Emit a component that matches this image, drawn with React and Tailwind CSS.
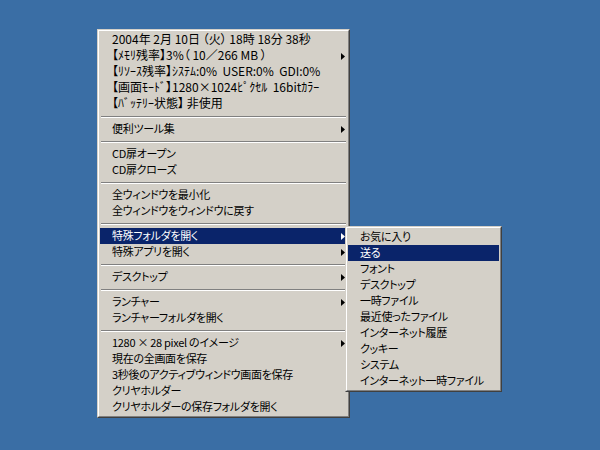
import React from "react";

const mainMenu = [
  { label: "2004年 2月 10日 （火） 18時 18分 38秒", status: true },
  { label: "【ﾒﾓﾘ残率】3%（ 10／266 MB ）", sub: true, status: true },
  { label: "【ﾘｿｰｽ残率】ｼｽﾃﾑ:0%  USER:0%  GDI:0%", status: true },
  { label: "【画面ﾓｰﾄﾞ】1280×1024ﾋﾟｸｾﾙ  16bitｶﾗｰ", status: true },
  { label: "【ﾊﾞｯﾃﾘｰ状態】 非使用", status: true },
  { sep: true },
  { label: "便利ツール集", sub: true },
  { sep: true },
  { label: "CD扉オープン" },
  { label: "CD扉クローズ" },
  { sep: true },
  { label: "全ウィンドウを最小化" },
  { label: "全ウィンドウをウィンドウに戻す" },
  { sep: true },
  { label: "特殊フォルダを開く", sub: true, active: true },
  { label: "特殊アプリを開く", sub: true },
  { sep: true },
  { label: "デスクトップ", sub: true },
  { sep: true },
  { label: "ランチャー", sub: true },
  { label: "ランチャーフォルダを開く" },
  { sep: true },
  { label: "1280 × 28 pixel のイメージ", sub: true },
  { label: "現在の全画面を保存" },
  { label: "3秒後のアクティブウィンドウ画面を保存" },
  { label: "クリヤホルダー" },
  { label: "クリヤホルダーの保存フォルダを開く" },
];

const folderMenu = [
  { label: "お気に入り" },
  { label: "送る", active: true },
  { label: "フォント" },
  { label: "デスクトップ" },
  { label: "一時ファイル" },
  { label: "最近使ったファイル" },
  { label: "インターネット履歴" },
  { label: "クッキー" },
  { label: "システム" },
  { label: "インターネット一時ファイル" },
];

const Arrow = () => (
  <svg width="4" height="7" viewBox="0 0 4 7" className="shrink-0">
    <polygon points="0,0 4,3.5 0,7" fill="currentColor" />
  </svg>
);

// classic Win2000 raised popup menu
const Menu = ({ items, className }) => (
  <div
    className={`absolute border border-t-[#d4d0c8] border-l-[#d4d0c8] border-b-[#404040] border-r-[#404040] ${className}`}
  >
    <div className="border border-t-white border-l-white border-b-[#808080] border-r-[#808080] bg-[#d4d0c8] p-px">
      {items.map((item, i) =>
        item.sep ? (
          <div key={i} className="h-[9px] flex flex-col justify-center px-px">
            <div className="h-px bg-[#808080]" />
            <div className="h-px bg-white" />
          </div>
        ) : (
          <div
            key={i}
            className={`h-4 flex items-center justify-between pl-[12px] pr-[2px] whitespace-pre ${
              item.active ? "bg-[#0a246a] text-white" : "text-black"
            }`}
          >
            <span
              className={`leading-4 -mt-[2px] ${
                item.status ? "text-[12px]" : "text-[11px] tracking-[-0.3px]"
              }`}
            >
              {item.label}
            </span>
            {item.sub && <Arrow />}
          </div>
        )
      )}
    </div>
  </div>
);

export default function App() {
  return (
    <div
      className="relative w-[600px] h-[450px] bg-[#3a6ea5] overflow-hidden text-[12px] [font-feature-settings:'palt']"
      style={{ fontFamily: '"Noto Sans CJK JP", "Noto Sans", sans-serif' }}
    >
      <Menu items={mainMenu} className="left-[97px] top-[29px] w-[253px]" />
      <Menu items={folderMenu} className="left-[345px] top-[226px] w-[157px]" />
    </div>
  );
}
